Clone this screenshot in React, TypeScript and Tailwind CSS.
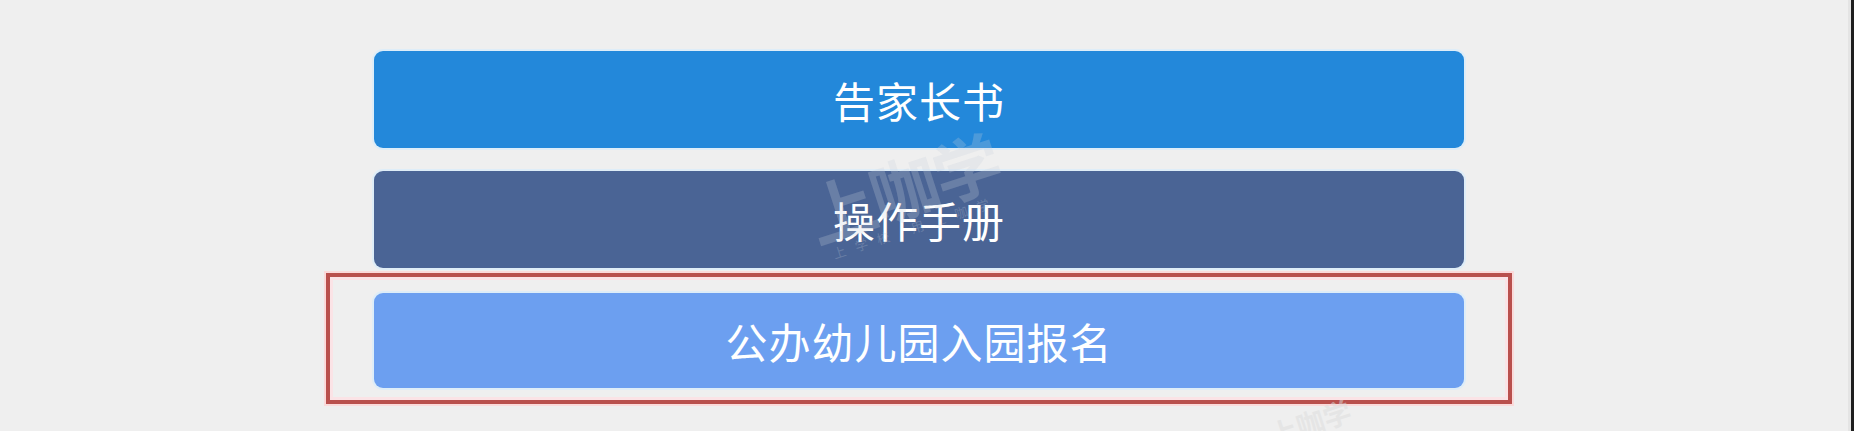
import React from "react";

function Btn({ label, color }: { label: string; color: string }) {
  return (
    <div
      className={`flex h-full w-full items-center justify-center rounded-[9px] text-[42px] leading-none tracking-[1px] text-white shadow-[0_0_0_2px_#deedf8] ${color}`}
    >
      {label}
    </div>
  );
}

export default function App() {
  return (
    <div
      className="relative flex h-[431px] w-[1854px] overflow-hidden bg-[#efefef]"
      style={{ fontFamily: '"Noto Sans CJK SC", "Noto Sans", sans-serif' }}
    >
      <div className="flex flex-1 flex-col pl-[326px] pt-[51px]">
        <div className="ml-[48px] h-[97px] w-[1090px]">
          <Btn label="告家长书" color="bg-[#2388da]" />
        </div>
        <div className="ml-[48px] mt-[23px] h-[97px] w-[1090px]">
          <Btn label="操作手册" color="bg-[#4a6495]" />
        </div>
        <div className="mt-[5px] h-[131px] w-[1186px] border-4 border-[#b9504d] px-[44px] pb-[12px] pt-[16px] shadow-[0_0_0_2px_#fbdada,inset_0_0_0_3px_#fbe3e6]">
          <Btn label="公办幼儿园入园报名" color="bg-[#6c9ff0]" />
        </div>
      </div>
      <div className="w-[3px] bg-[#e4e4e4]" />
      <div className="w-[3px] bg-[#1f1f1f]" />

      <div className="pointer-events-none absolute left-[806px] top-[152px] flex -rotate-[18deg] flex-col items-center">
        <div className="text-[68px] font-bold leading-none tracking-[-2px] text-[#c9cfdc]/25">上咖学</div>
        <div className="mt-[2px] text-[13px] leading-none tracking-[10px] text-[#c9cfdc]/25">上学校 用上咖学</div>
      </div>
      <div className="pointer-events-none absolute left-[1268px] top-[408px] -rotate-[18deg] text-[28px] font-bold leading-none text-[#dcdcdc]/50">
        上咖学
      </div>
    </div>
  );
}
